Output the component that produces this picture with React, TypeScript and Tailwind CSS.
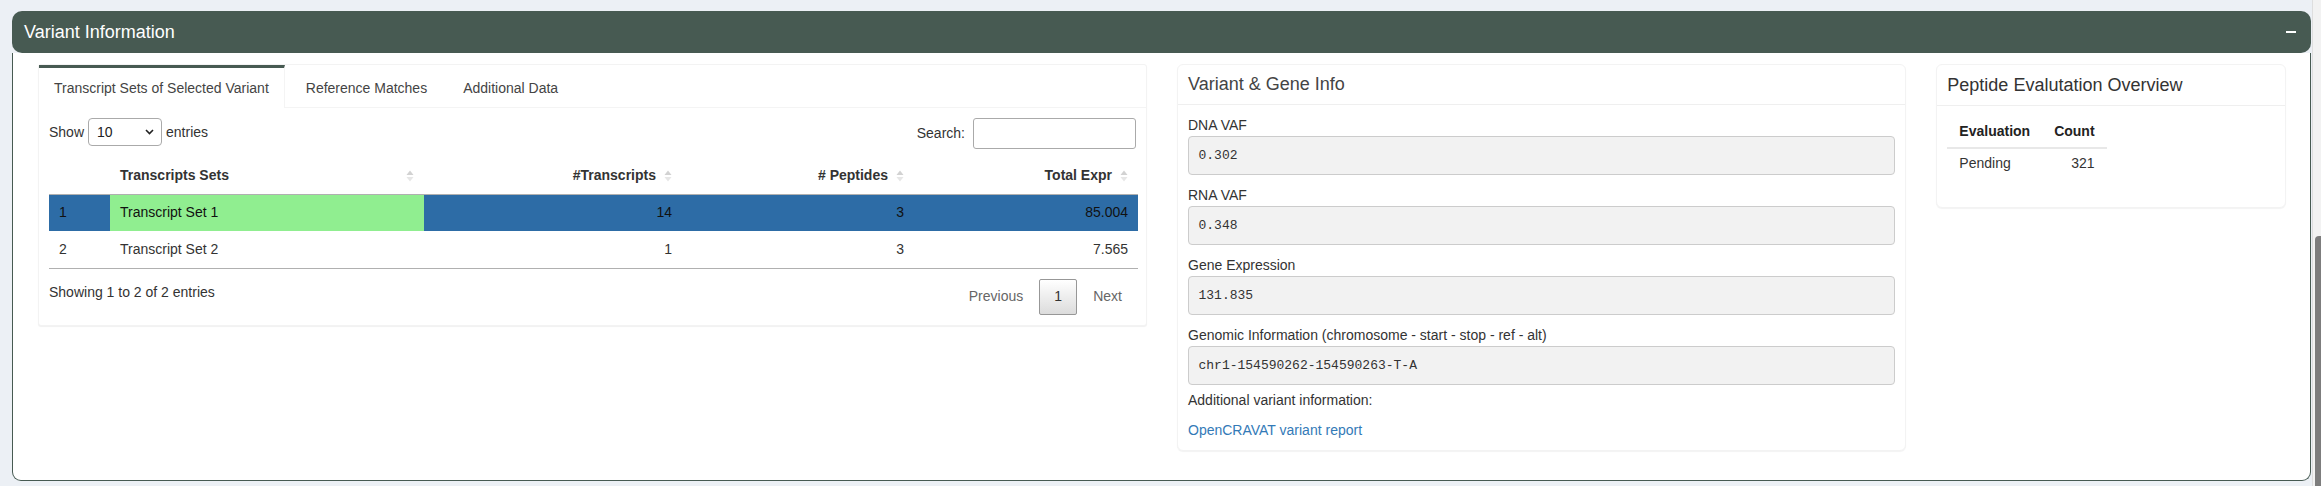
import React from 'react';

const TABS = ['Transcript Sets of Selected Variant', 'Reference Matches', 'Additional Data'];

const ROWS = [
  { idx: 1, name: 'Transcript Set 1', transcripts: 14, peptides: 3, expr: '85.004', selected: true },
  { idx: 2, name: 'Transcript Set 2', transcripts: 1, peptides: 3, expr: '7.565', selected: false },
];

const INFO = [
  { label: 'DNA VAF', value: '0.302' },
  { label: 'RNA VAF', value: '0.348' },
  { label: 'Gene Expression', value: '131.835' },
  { label: 'Genomic Information (chromosome - start - stop - ref - alt)', value: 'chr1-154590262-154590263-T-A' },
];

function SortIcon() {
  return (
    <svg
      width="8"
      height="14"
      viewBox="0 0 8 14"
      className="absolute right-[10px] top-1/2 -translate-y-1/2"
    >
      <path d="M0.5 6 L4 1.5 L7.5 6 Z" fill="#d2d2d2" />
      <path d="M0.5 8 L4 12.5 L7.5 8 Z" fill="#e6e6e6" />
    </svg>
  );
}

function TranscriptTable() {
  return (
    <div className="rounded-[3px] border border-[#f3f3f3] bg-white shadow-[0_1px_1px_rgba(0,0,0,0.06)]">
      {/* Tabs */}
      <div className="flex border-b border-[#f4f4f4]">
        {TABS.map((tab, i) => (
          <div
            key={tab}
            className={
              i === 0
                ? 'flex h-[43px] -mb-px items-center border-r border-t-[3px] border-r-[#f4f4f4] border-t-[#475a52] bg-white px-[15px] text-[#444]'
                : 'ml-[6px] flex h-[43px] -mb-px items-center px-[15px] pt-[3px] text-[#444]'
            }
          >
            {tab}
          </div>
        ))}
      </div>

      <div className="p-[10px]">
        {/* Length + search */}
        <div className="flex items-start justify-between">
          <div className="flex h-[28px] items-center gap-[4px] text-[#333]">
            <span>Show</span>
            <div className="flex h-[28px] w-[74px] items-center justify-between rounded-[4px] border border-[#aaaaaa] bg-white pl-[8px] pr-[7px]">
              <span className="text-[#222]">10</span>
              <svg width="9" height="6" viewBox="0 0 9 6">
                <path d="M1 1 L4.5 4.5 L8 1" fill="none" stroke="#222" strokeWidth="1.6" />
              </svg>
            </div>
            <span>entries</span>
          </div>
          <div className="flex h-[31px] items-center gap-[8px] text-[#333]">
            <span>Search:</span>
            <div className="h-[31px] w-[163px] rounded-[3px] border border-[#aaaaaa] bg-white" />
          </div>
        </div>

        {/* Table */}
        <table className="mt-[9px] w-full table-fixed border-collapse border-b border-[#b0b0b0]">
          <colgroup>
            <col className="w-[61px]" />
            <col className="w-[314px]" />
            <col className="w-[258px]" />
            <col className="w-[232px]" />
            <col className="w-[224px]" />
          </colgroup>
          <thead>
            <tr className="border-b border-[#b0b0b0]">
              <th className="h-[36px]" />
              <th className="relative h-[36px] pl-[10px] pr-[26px] text-left font-bold text-[#333]">
                Transcripts Sets
                <SortIcon />
              </th>
              <th className="relative h-[36px] pl-[10px] pr-[26px] text-right font-bold text-[#333]">
                #Transcripts
                <SortIcon />
              </th>
              <th className="relative h-[36px] pl-[10px] pr-[26px] text-right font-bold text-[#333]">
                # Peptides
                <SortIcon />
              </th>
              <th className="relative h-[36px] pl-[10px] pr-[26px] text-right font-bold text-[#333]">
                Total Expr
                <SortIcon />
              </th>
            </tr>
          </thead>
          <tbody>
            {ROWS.map((row) => (
              <tr
                key={row.idx}
                className={row.selected ? 'h-[37px] bg-[#2d6ca6] text-[#111]' : 'h-[37px] bg-white text-[#333]'}
              >
                <td className="px-[10px]">{row.idx}</td>
                <td className={row.selected ? 'bg-[#90ee90] px-[10px]' : 'px-[10px]'}>{row.name}</td>
                <td className="px-[10px] text-right">{row.transcripts}</td>
                <td className="px-[10px] text-right">{row.peptides}</td>
                <td className="px-[10px] text-right">{row.expr}</td>
              </tr>
            ))}
          </tbody>
        </table>

        {/* Info + pagination */}
        <div className="flex items-start justify-between pt-[10px]">
          <div className="pt-[3px] leading-[20px] text-[#333]">Showing 1 to 2 of 2 entries</div>
          <div className="flex items-center gap-[2px]">
            <span className="flex h-[36px] items-center px-[14px] text-[#666]">Previous</span>
            <span className="flex h-[36px] w-[38px] items-center justify-center rounded-[2px] border border-[#979797] bg-gradient-to-b from-white to-[#dcdcdc] text-[#333]">
              1
            </span>
            <span className="flex h-[36px] items-center px-[14px] text-[#666]">Next</span>
          </div>
        </div>
      </div>
    </div>
  );
}

function GeneInfo() {
  return (
    <div className="rounded-[6px] border border-[#f3f3f3] bg-white shadow-[0_1px_1px_rgba(0,0,0,0.05)]">
      <div className="flex h-[40px] items-center border-b border-[#efefef] px-[10px] text-[18px] text-[#444]">
        Variant &amp; Gene Info
      </div>
      <div className="p-[10px] text-[#333]">
        {INFO.map((f, i) => (
          <div key={f.label} className={i === INFO.length - 1 ? 'mb-[5px]' : 'mb-[10px]'}>
            <div className="mb-px leading-[20px]">{f.label}</div>
            <pre className="rounded-[4px] border border-[#cccccc] bg-[#f2f2f2] px-[9.5px] py-[9px] font-['Liberation_Mono',monospace] text-[13px] leading-[19px] text-[#333]">
              {f.value}
            </pre>
          </div>
        ))}
        <p className="mb-[10px] leading-[20px]">Additional variant information:</p>
        <a className="block leading-[20px] text-[#337ab7]">OpenCRAVAT variant report</a>
      </div>
    </div>
  );
}

function PeptideOverview() {
  return (
    <div className="rounded-[6px] border border-[#f3f3f3] bg-white shadow-[0_1px_1px_rgba(0,0,0,0.05)]">
      <div className="flex h-[41px] items-center border-b border-[#efefef] px-[10px] text-[18px] text-[#333]">
        Peptide Evalutation Overview
      </div>
      <div className="px-[10px] pb-[10px] pt-[9px]">
        <table className="mb-[20px] border-collapse text-[#333]">
          <thead>
            <tr className="border-b-2 border-[#e8e8e8]">
              <th className="px-[12px] py-[6px] text-left font-bold leading-[20px] text-[#222]">Evaluation</th>
              <th className="px-[12px] py-[6px] text-right font-bold leading-[20px] text-[#222]">Count</th>
            </tr>
          </thead>
          <tbody>
            <tr>
              <td className="px-[12px] py-[4px] leading-[20px]">Pending</td>
              <td className="px-[12px] py-[4px] text-right leading-[20px]">321</td>
            </tr>
          </tbody>
        </table>
      </div>
    </div>
  );
}

export default function App() {
  return (
    <div className="flex h-[486px] w-full overflow-hidden bg-[#ecf0f5] font-['Liberation_Sans',Arial,sans-serif] text-[14px]">
      <div className="min-w-0 flex-1 pl-[12px] pr-px pt-[11px]">
        {/* Header bar */}
        <div className="flex h-[42px] items-center justify-between rounded-[10px] bg-[#475a52] pl-[12px] pr-[15px]">
          <span className="text-[18px] text-white">Variant Information</span>
          <span className="block h-[2px] w-[10px] bg-white" />
        </div>

        {/* Body */}
        <div className="h-[428px] rounded-b-[9px] border border-t-0 border-[#475a52] bg-white pl-[25px] pr-[24px] pt-[11px]">
          <div className="grid grid-cols-12 items-start gap-x-[30px]">
            <div className="col-span-6">
              <TranscriptTable />
            </div>
            <div className="col-span-4">
              <GeneInfo />
            </div>
            <div className="col-span-2">
              <PeptideOverview />
            </div>
          </div>
        </div>
      </div>

      {/* Scrollbar */}
      <div className="flex w-[9px] flex-col justify-end border-l border-[#dedede] bg-[#f2f2f2] pl-[2px]">
        <div className="h-[250px] rounded-tl-[4px] bg-[#7d7d7d]" />
      </div>
    </div>
  );
}
